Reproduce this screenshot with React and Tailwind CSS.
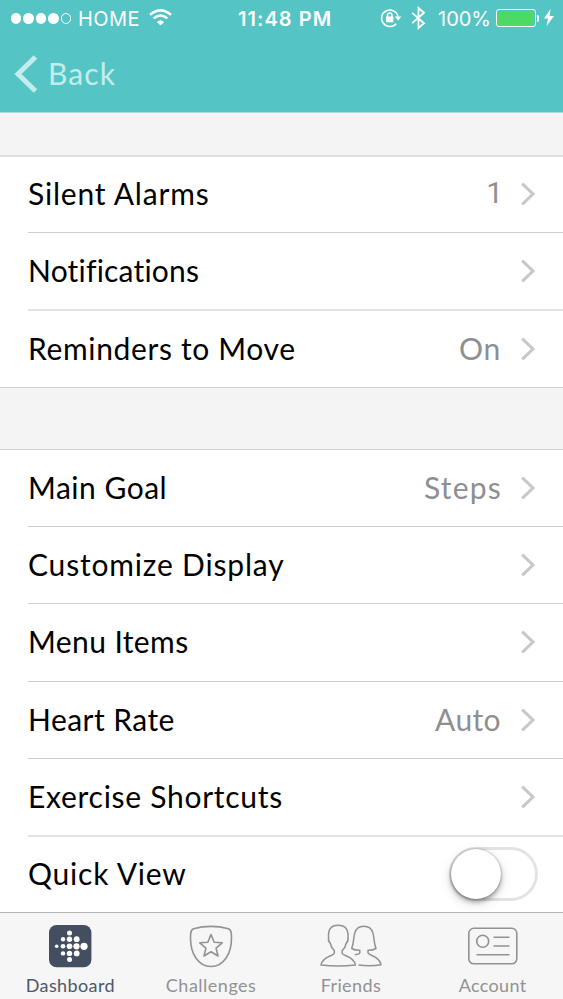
const listFont = "font-['Lato','Open_Sans',sans-serif]";
const systemFont = "font-['Inter','Roboto',sans-serif]";

function Chevron() {
  return (
    <svg className="mt-px ml-5 h-6 w-[15px] shrink-0" viewBox="0 0 15 24" fill="none" stroke="#c7c7cc" strokeWidth="3">
      <path d="M1.200 1.600 12 12 1.200 22.400" />
    </svg>
  );
}

function Toggle() {
  return (
    <span className="mr-[-2px] flex h-[54px] w-[89px] items-center rounded-full border-[3px] border-[#e3e3e5] bg-white">
      <span className="-ml-[1px] h-[50px] w-[50px] rounded-full bg-white shadow-[0_3px_5px_rgba(0,0,0,0.35),0_0_2px_rgba(0,0,0,0.35),0_4px_14px_rgba(0,0,0,0.12)]" />
    </span>
  );
}

function Row({ label, value, tracking, valueTracking = "", height, line, toggle }) {
  return (
    <div className={`ml-7 flex items-center pr-[27px] pb-[2px] text-[30px] leading-9 ${height} ${line}`}>
      <span className={`-mt-px flex-1 whitespace-nowrap text-black ${tracking}`}>{label}</span>
      {value && <span className={`-mt-px text-[#8e8e93] ${valueTracking}`}>{value}</span>}
      {toggle ? <Toggle /> : <Chevron />}
    </div>
  );
}

function StatusBar() {
  return (
    <div className={`flex h-[37px] items-center text-[20px] leading-6 text-white ${systemFont}`}>
      <div className="flex w-[238px] items-center pl-[11px]">
        <div className="flex gap-[2px]">
          {[0, 1, 2, 3].map((i) => (
            <span key={i} className="h-[10.4px] w-[10.4px] rounded-full bg-white" />
          ))}
          <span className="h-[10.4px] w-[10.4px] rounded-full border border-white" />
        </div>
        <span className="ml-[7px] w-[62px] whitespace-nowrap tracking-[0.4px]">HOME</span>
        <svg className="-mt-[2px] ml-[9px] h-[17px] w-[23px]" viewBox="0 0 23 17" fill="none" stroke="#fff" strokeWidth="2.5">
          <path d="M1 5.7Q11.500-3 22 5.700M4.600 9.400Q11.500 3.600 18.400 9.400" />
          <path d="M11.500 16.500 7.900 12.900Q11.500 9.800 15.100 12.900Z" fill="#fff" stroke="none" />
        </svg>
      </div>
      <span className="w-[142px] whitespace-nowrap font-semibold tracking-[1.05px]">11:48 PM</span>
      <svg className="-mt-[2px] h-5 w-[22px]" viewBox="0 0 22 20" fill="none" stroke="#fff" strokeWidth="1.5">
        <path d="M16.200 15.700A8.300 8.300 0 1 1 18 8.500" />
        <path d="M14.800 8.500h6.500l-3.200 4.300Z" fill="#fff" stroke="none" />
        <rect x="6" y="8.500" width="7.400" height="5.800" rx="0.600" fill="#fff" stroke="none" />
        <path d="M7.500 9V7.300a2.200 2.200 0 0 1 4.400 0V9" />
      </svg>
      <svg className="-mt-[2px] ml-[9px] h-[24px] w-[15px]" viewBox="0 0 15 24" fill="none" stroke="#fff" strokeWidth="1.800">
        <path d="M1.200 6.800 13 17.300 7.500 22V2l5.500 4.700L1.200 17.200" />
      </svg>
      <span className="ml-[12px] w-[53px] whitespace-nowrap">100%</span>
      <span className="-mt-px ml-[5px] flex h-[18px] w-[40px] shrink-0 rounded-[3px] border border-white p-px">
        <span className="flex-1 rounded-[1px] bg-[#4cd964]" />
      </span>
      <span className="-mt-px ml-px h-[7px] w-[2px] shrink-0 rounded-r-full bg-white" />
      <svg className="-mt-[2px] ml-[5px] h-[17px] w-[10px] shrink-0" viewBox="0 0 10 17" fill="#fff">
        <path d="M6.500 0 0 9.500h4L2.600 17 10 7H5.700Z" />
      </svg>
    </div>
  );
}

function DashboardIcon() {
  const dots = [
    [20.500, 9, 2.500], [14, 15.200, 2.200], [20.500, 15.200, 2.700], [27.700, 15.200, 2.900],
    [7.700, 22.300, 1.800], [14, 22.300, 2.300], [20.500, 22.300, 2.800], [27.500, 22.300, 3.100], [35, 22.300, 3.600],
    [14, 29.400, 2.200], [20.500, 29.400, 2.700], [27.700, 29.400, 2.900], [20.500, 35.600, 2.500],
  ];
  return (
    <svg className="h-[44px] w-[43px]" viewBox="0 0 43 44">
      <rect x="0" y="1" width="42.400" height="42.300" rx="7.500" fill="#434f60" />
      {dots.map(([x, y, r]) => (
        <circle key={`${x}-${y}`} cx={x} cy={y} r={r} fill="#fff" />
      ))}
    </svg>
  );
}

function ChallengesIcon() {
  return (
    <svg className="h-[44px] w-[44px]" viewBox="0 0 44 44" fill="none" stroke="#929292" strokeWidth="1.600" strokeLinejoin="round">
      <path d="M4.500 4.700Q22 0 39.500 4.700Q42 5.700 42.300 9.500C44 30 34 42.500 22 42.500S0 30 1.700 9.500Q2 5.700 4.500 4.700Z" />
      <path d="M22 10.500 25.200 18.200 33.200 18.800 27.100 24.100 29 32 22 27.700 15 32 16.900 24.100 10.800 18.800 18.800 18.200Z" />
    </svg>
  );
}

function FriendsIcon() {
  return (
    <svg className="mr-[2px] h-[44px] w-[62px]" viewBox="0 0 62 44" fill="none" stroke="#929292" strokeWidth="1.500" strokeLinejoin="round">
      <path d="M14.300 26.500V29.500C13 32 2 32.500 1 41Q18 43 35.500 41C34.500 32.500 23.500 32 22.200 29.500V26.500Q25.500 23.500 26.300 19Q28.400 17.500 28 13.500C28.600 5 25 1.200 18.200 1.200S7.800 5 8.600 13.500Q8 17.500 10.200 19Q11 23.500 14.300 26.500Z" />
      <path d="M34.800 30.700Q39.800 30 39.800 28.700V26.300Q35 26.500 31.700 24.500C34 19 33.400 13 34.800 9Q36.500 2.200 43.800 2.200T52.900 9C54.300 13 53.700 19 56 24.500Q52.500 26.500 48 26.300V28.700C48.500 32 59.500 31.500 61 40.800Q50 42.500 38.500 41" />
    </svg>
  );
}

function AccountIcon() {
  return (
    <svg className="h-[44px] w-[50px]" viewBox="0 0 50 44" fill="none" stroke="#929292" strokeWidth="1.600">
      <rect x="0.800" y="4.300" width="48" height="35.500" rx="5" />
      <circle cx="14.700" cy="17.300" r="6" />
      <path d="M25.500 13.300H41.500M25.500 22H41.500M8.500 30.700H41.500" />
    </svg>
  );
}

const tabs = [
  { name: "Dashboard", Icon: DashboardIcon, style: "text-[#4c5868] tracking-[0.4px]" },
  { name: "Challenges", Icon: ChallengesIcon, style: "text-[#929292] tracking-[0.5px]" },
  { name: "Friends", Icon: FriendsIcon, style: "mr-[2px] text-[#929292] tracking-[0.4px]" },
  { name: "Account", Icon: AccountIcon, style: "text-[#929292] tracking-[0.3px]" },
];

export default function App() {
  return (
    <div className={`flex h-[999px] w-[563px] flex-col overflow-hidden bg-[#f4f4f4] ${listFont}`}>
      <header className="h-[113px] shrink-0 border-b border-[#a5dedf] bg-[#55c4c5]">
        <StatusBar />
        <div className="flex h-[73px] items-center pl-[14px] text-[30px] text-[#c5ecec]">
          <svg className="h-[38px] w-6" viewBox="0 0 24 38" fill="none" stroke="currentColor" strokeWidth="5">
            <path d="M21.500 2 4 19 21.500 36" />
          </svg>
          <span className="ml-[10px] tracking-[1.1px]">Back</span>
        </div>
      </header>

      <section className="mt-[42px] border-y border-t-2 border-t-[#e0e0e0] border-b-[#cfcfcf] bg-white">
        <Row label="Silent Alarms" value="1" tracking="tracking-[0.8px]" valueTracking="-mr-[2px] font-['Roboto',sans-serif]" height="h-[76px]" line="border-b border-[#cfcfcf]" />
        <Row label="Notifications" tracking="tracking-[0.2px]" height="h-[78px]" line="border-b-2 border-[#e2e2e2]" />
        <Row label="Reminders to Move" value="On" tracking="tracking-[0.65px]" valueTracking="tracking-[0.8px]" height="h-[76px]" line="" />
      </section>

      <section className="mt-[61px] border-t border-[#cfcfcf] bg-white">
        <Row label="Main Goal" value="Steps" tracking="tracking-[0.5px]" valueTracking="-mr-px tracking-[1.2px]" height="h-[77px]" line="border-b border-[#cfcfcf]" />
        <Row label="Customize Display" tracking="tracking-[0.82px]" height="h-[77px]" line="border-b border-[#cfcfcf]" />
        <Row label="Menu Items" tracking="tracking-[0.4px]" height="h-[78px]" line="border-b border-[#cfcfcf]" />
        <Row label="Heart Rate" value="Auto" tracking="tracking-[0.45px]" valueTracking="tracking-[0.4px]" height="h-[77px]" line="border-b border-[#cfcfcf]" />
        <Row label="Exercise Shortcuts" tracking="tracking-[0.72px]" height="h-[78px]" line="border-b-2 border-[#e2e2e4]" />
        <Row label="Quick View" tracking="tracking-[0.8px]" height="h-[75px]" line="" toggle />
      </section>

      <nav className="grid h-[87px] shrink-0 grid-cols-4 border-t border-[#b4b4b4] bg-[#f6f6f6]">
        {tabs.map(({ name, Icon, style }) => (
          <div key={name} className="flex flex-col items-center pt-[11px]">
            <Icon />
            <span className={`mt-[6px] text-[18px] leading-[22px] ${style}`}>{name}</span>
          </div>
        ))}
      </nav>
    </div>
  );
}
